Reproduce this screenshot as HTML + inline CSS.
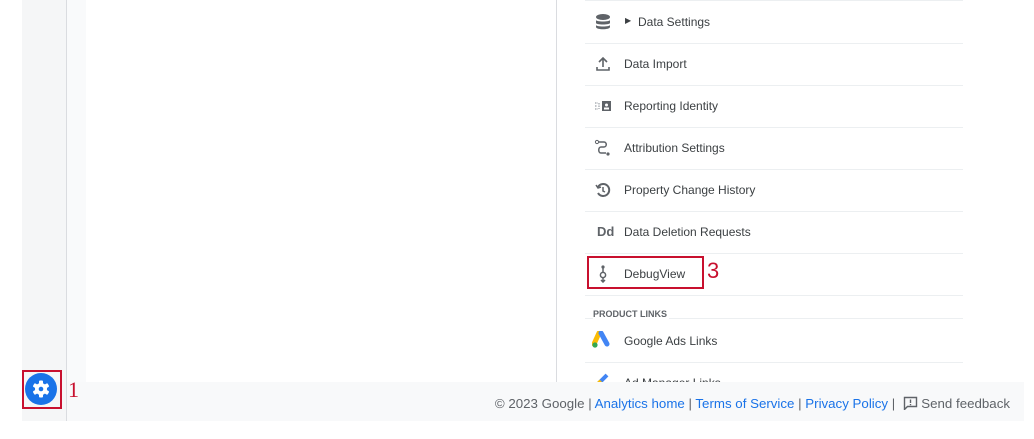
<!DOCTYPE html>
<html><head><style>
body{margin:0;width:1034px;height:439px;background:#fff;position:relative;overflow:hidden;font-family:"Liberation Sans",Arial,sans-serif;}
.abs{position:absolute}
.row{position:absolute;left:585px;width:378px;height:42px;border-bottom:1px solid #eceff1;}
.row .t{position:absolute;left:39px;top:14px;font-size:12px;color:#3c4043;}
.row .i{position:absolute;left:9px;top:12px;width:18px;height:18px;}
.ft{font-size:13.3px;color:#5f6368}
.ft a{color:#1a73e8;text-decoration:none}
</style></head><body>
<div class="abs" style="left:22px;top:0;width:44px;height:421px;background:#f5f6f7"></div>
<div class="abs" style="left:66px;top:0;width:1px;height:421px;background:#dadce0"></div>
<div class="abs" style="left:67px;top:0;width:19px;height:382px;background:#f9fafb"></div>
<div class="abs" style="left:556px;top:0;width:1px;height:382px;background:#dadce0"></div>
<div class="abs" style="left:585px;top:0;width:378px;height:1px;background:#eceff1"></div>

<div class="row" style="top:1px"><svg class="i" viewBox="0 0 18 18"><ellipse cx="9" cy="4" rx="7" ry="3" fill="#5f6368"/><path d="M2 7c0 2 14 2 14 0v3c0 2-14 2-14 0z M2 12c0 2 14 2 14 0v2c0 3-14 3-14 0z" fill="#5f6368"/></svg><span class="t" style="left:40px;font-size:8px;top:15px;color:#3c4043">▶</span><span class="t" style="left:53px">Data Settings</span></div>
<div class="row" style="top:43px"><svg class="i" viewBox="0 0 18 18"><path d="M9 3v9M5 7l4-4 4 4M3 12v3h12v-3" stroke="#5f6368" stroke-width="1.6" fill="none"/></svg><span class="t">Data Import</span></div>
<div class="row" style="top:85px"><svg class="i" viewBox="0 0 18 18"><path d="M1 6h3M1 9h2M1 12h3M5 6v6" stroke="#9aa0a6" stroke-width="1.2" stroke-dasharray="1.5 1"/><rect x="8" y="4" width="9" height="10" fill="#5f6368"/><circle cx="12.5" cy="8" r="1.5" fill="#fff"/><rect x="10" y="10.5" width="5" height="2" fill="#fff"/></svg><span class="t">Reporting Identity</span></div>
<div class="row" style="top:127px"><svg class="i" viewBox="0 0 18 18"><circle cx="3" cy="3" r="1.6" stroke="#5f6368" fill="none"/><circle cx="14" cy="15" r="1.6" fill="#5f6368"/><path d="M5 3h5c3 0 3 5 0 5H7c-3 0-3 6 0 6h5" stroke="#5f6368" stroke-width="1.5" fill="none"/></svg><span class="t">Attribution Settings</span></div>
<div class="row" style="top:169px"><svg class="i" viewBox="0 0 18 18"><path d="M4 6a6 6 0 1 1 0 6" stroke="#5f6368" stroke-width="2" fill="none"/><path d="M9 6v4l2 1" stroke="#5f6368" stroke-width="1.5" fill="none"/><path d="M2 4l2 3 3-1" stroke="#5f6368" stroke-width="1.5" fill="none"/></svg><span class="t">Property Change History</span></div>
<div class="row" style="top:211px"><span class="t" style="left:12px;font-weight:bold;color:#5f6368;font-size:13px;top:13px">Dd</span><span class="t">Data Deletion Requests</span></div>
<div class="row" style="top:253px"><svg class="i" viewBox="0 0 18 18"><circle cx="9" cy="2" r="1.6" fill="#5f6368"/><path d="M9 3v4" stroke="#5f6368" stroke-width="1.5"/><circle cx="9" cy="10" r="2.6" stroke="#5f6368" stroke-width="1.5" fill="none"/><path d="M9 13v4M7 15l2 2 2-2" stroke="#5f6368" stroke-width="1.5" fill="none"/></svg><span class="t">DebugView</span></div>
<div class="abs" style="left:587px;top:256px;width:113px;height:29px;border:2px solid #c8102e"></div>
<div class="abs" style="left:707px;top:258px;font-size:22px;color:#c8102e">3</div>
<div class="abs" style="left:585px;top:318px;width:378px;height:1px;background:#eceff1"></div>
<div class="abs" style="left:593px;top:309px;font-size:9px;font-weight:bold;color:#5f6368;background:#fff;padding-right:2px">PRODUCT LINKS</div>
<div class="row" style="top:320px"><svg class="i" viewBox="0 0 20 18" style="width:20px;left:7px;top:11px"><path d="M7 2l-5 11" stroke="#fbbc04" stroke-width="5" stroke-linecap="round"/><path d="M9 2l6 11" stroke="#4285f4" stroke-width="5" stroke-linecap="round"/><circle cx="3" cy="14" r="2.6" fill="#34a853"/></svg><span class="t">Google Ads Links</span></div>
<div class="abs" style="left:595px;top:372px;width:16px;height:10px;overflow:hidden"><svg width="16" height="14" viewBox="0 0 16 14"><path d="M3 12L12 3" stroke="#4285f4" stroke-width="4"/><path d="M3 12l3-3" stroke="#fbbc04" stroke-width="4"/></svg></div>
<div class="abs" style="left:624px;top:376px;height:6px;overflow:hidden;font-size:12px;color:#3c4043;line-height:14px">Ad Manager Links</div>

<div class="abs" style="left:67px;top:382px;width:957px;height:39px;background:#f8f9fa"></div>
<div class="abs ft" style="right:24px;top:396px;white-space:nowrap">© 2023 Google | <a>Analytics home</a> | <a>Terms of Service</a> | <a>Privacy Policy</a> | &nbsp;<svg width="15" height="14" viewBox="0 0 15 14" style="vertical-align:-2px"><path d="M1.5 1.5h12v9h-9l-3 3z" stroke="#5f6368" stroke-width="1.4" fill="none"/><path d="M7.5 3.5v3.5M7.5 8v1.2" stroke="#5f6368" stroke-width="1.4"/></svg> Send feedback</div>

<div class="abs" style="left:22px;top:370px;width:36px;height:35px;border:2px solid #c8102e"></div>
<svg class="abs" style="left:25px;top:373px" width="32" height="32" viewBox="0 0 32 32"><circle cx="16" cy="16" r="16" fill="#1a73e8"/><g fill="#fff"><circle cx="16" cy="16" r="6"/><rect x="14" y="7.5" width="4" height="17" rx="1"/><rect x="14" y="7.5" width="4" height="17" rx="1" transform="rotate(60 16 16)"/><rect x="14" y="7.5" width="4" height="17" rx="1" transform="rotate(120 16 16)"/></g><circle cx="16" cy="16" r="2.3" fill="#1a73e8"/></svg>
<div class="abs" style="left:68px;top:377px;font-size:22px;color:#c8102e;font-family:'Liberation Serif',serif">1</div>
</body></html>
